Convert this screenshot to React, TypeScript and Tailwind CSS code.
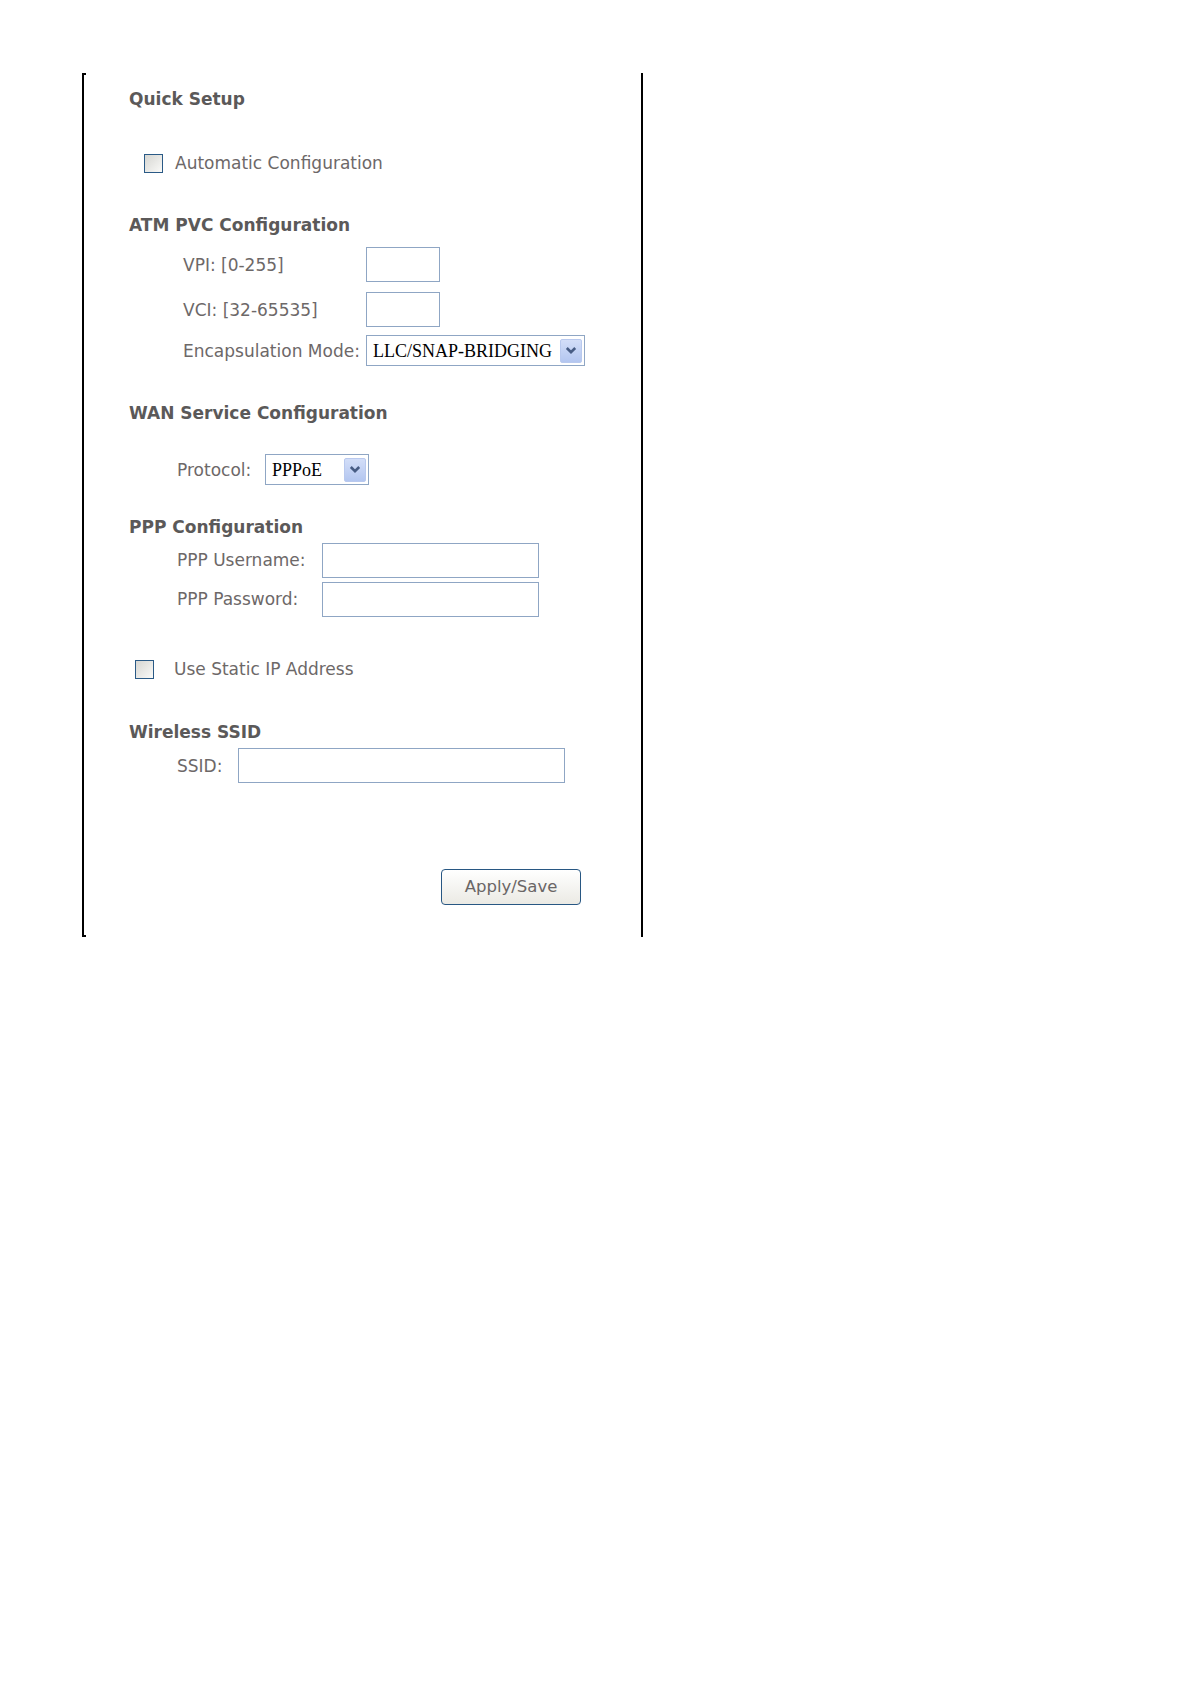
import React from "react";

const sans = { fontFamily: '"DejaVu Sans", Verdana, sans-serif' };

function Heading({ children, className = "" }: { children: React.ReactNode; className?: string }) {
  return (
    <div className={`h-5 text-[17px] leading-5 font-bold text-[#5b5959] ${className}`}>
      {children}
    </div>
  );
}

function Label({ children, className = "" }: { children: React.ReactNode; className?: string }) {
  return <span className={`text-[17px] leading-5 text-[#6d6868] whitespace-nowrap ${className}`}>{children}</span>;
}

function TextBox({ className = "" }: { className?: string }) {
  return (
    <input
      type="text"
      className={`h-[35px] border border-[#8fa6c4] bg-white outline-none ${className}`}
    />
  );
}

function CheckBox() {
  return (
    <span className="block h-[19px] w-[19px] border border-[#2a5a86] bg-gradient-to-br from-[#d6d6d2] to-[#fafaf8]" />
  );
}

function ArrowButton() {
  return (
    <span className="flex h-6 w-[22px] items-center justify-center rounded-[2px] border border-[#b9c9ee] bg-gradient-to-b from-[#d3def8] to-[#b3c6f0]">
      <svg width="12" height="9" viewBox="0 0 12 9">
        <path d="M1.8 2 L6 6.2 L10.2 2" fill="none" stroke="#475c84" strokeWidth="2.6" />
      </svg>
    </span>
  );
}

function SelectBox({ value, className = "" }: { value: string; className?: string }) {
  return (
    <div
      className={`flex h-[31px] items-center justify-between border border-[#8fa6c4] bg-white pl-[6px] pr-[2px] ${className}`}
    >
      <span
        className="text-[18px] leading-5 text-black"
        style={{ fontFamily: '"Liberation Serif", "Times New Roman", serif' }}
      >
        {value}
      </span>
      <ArrowButton />
    </div>
  );
}

export default function App() {
  return (
    <div className="min-h-[1684px] w-[1190px] bg-white" style={sans}>
      <div className="flex pl-[82px] pt-[73px]">
        {/* left rule with ticks */}
        <div className="flex h-[864px] flex-col">
          <div className="h-[2px] w-1 bg-black" />
          <div className="w-[2px] flex-1 bg-black" />
          <div className="h-[2px] w-1 bg-black" />
        </div>

        <div className="flex w-[555px] flex-col pl-[43px] pt-[16px]">
          <Heading>Quick Setup</Heading>

          <div className="mt-[44px] flex h-5 items-center pl-[15px]">
            <CheckBox />
            <Label className="ml-[12px]">Automatic Configuration</Label>
          </div>

          <Heading className="mt-[42px]">ATM PVC Configuration</Heading>

          <div className="mt-[12px] flex items-center pl-[54px]">
            <Label className="w-[183px]">VPI: [0-255]</Label>
            <TextBox className="w-[74px]" />
          </div>
          <div className="mt-[10px] flex items-center pl-[54px]">
            <Label className="w-[183px]">VCI: [32-65535]</Label>
            <TextBox className="w-[74px]" />
          </div>
          <div className="mt-[8px] flex items-center pl-[54px]">
            <Label className="w-[183px]">Encapsulation Mode:</Label>
            <SelectBox value="LLC/SNAP-BRIDGING" className="w-[219px]" />
          </div>

          <Heading className="mt-[37px]">WAN Service Configuration</Heading>

          <div className="mt-[31px] flex items-center pl-[48px]">
            <Label className="w-[88px]">Protocol:</Label>
            <SelectBox value="PPPoE" className="w-[104px]" />
          </div>

          <Heading className="mt-[32px]">PPP Configuration</Heading>

          <div className="mt-[6px] flex items-center pl-[48px]">
            <Label className="w-[145px] -mt-[2px]">PPP Username:</Label>
            <TextBox className="w-[217px]" />
          </div>
          <div className="mt-[4px] flex items-center pl-[48px]">
            <Label className="w-[145px] -mt-[2px]">PPP Password:</Label>
            <TextBox className="w-[217px]" />
          </div>

          <div className="mt-[42px] flex h-5 items-center pl-[6px]">
            <CheckBox />
            <Label className="ml-[20px]">Use Static IP Address</Label>
          </div>

          <Heading className="mt-[43px]">Wireless SSID</Heading>

          <div className="mt-[6px] flex items-center pl-[48px]">
            <Label className="w-[61px]">SSID:</Label>
            <TextBox className="w-[327px]" />
          </div>

          <div className="mt-[86px] flex pl-[312px]">
            <button className="h-9 w-[140px] rounded-[4px] border border-[#285783] bg-gradient-to-b from-[#ffffff] to-[#ebeae4] text-[16.5px] leading-5 text-[#6a6666]">
              Apply/Save
            </button>
          </div>
        </div>

        {/* right rule */}
        <div className="h-[864px] w-[2px] bg-black" />
      </div>
    </div>
  );
}
